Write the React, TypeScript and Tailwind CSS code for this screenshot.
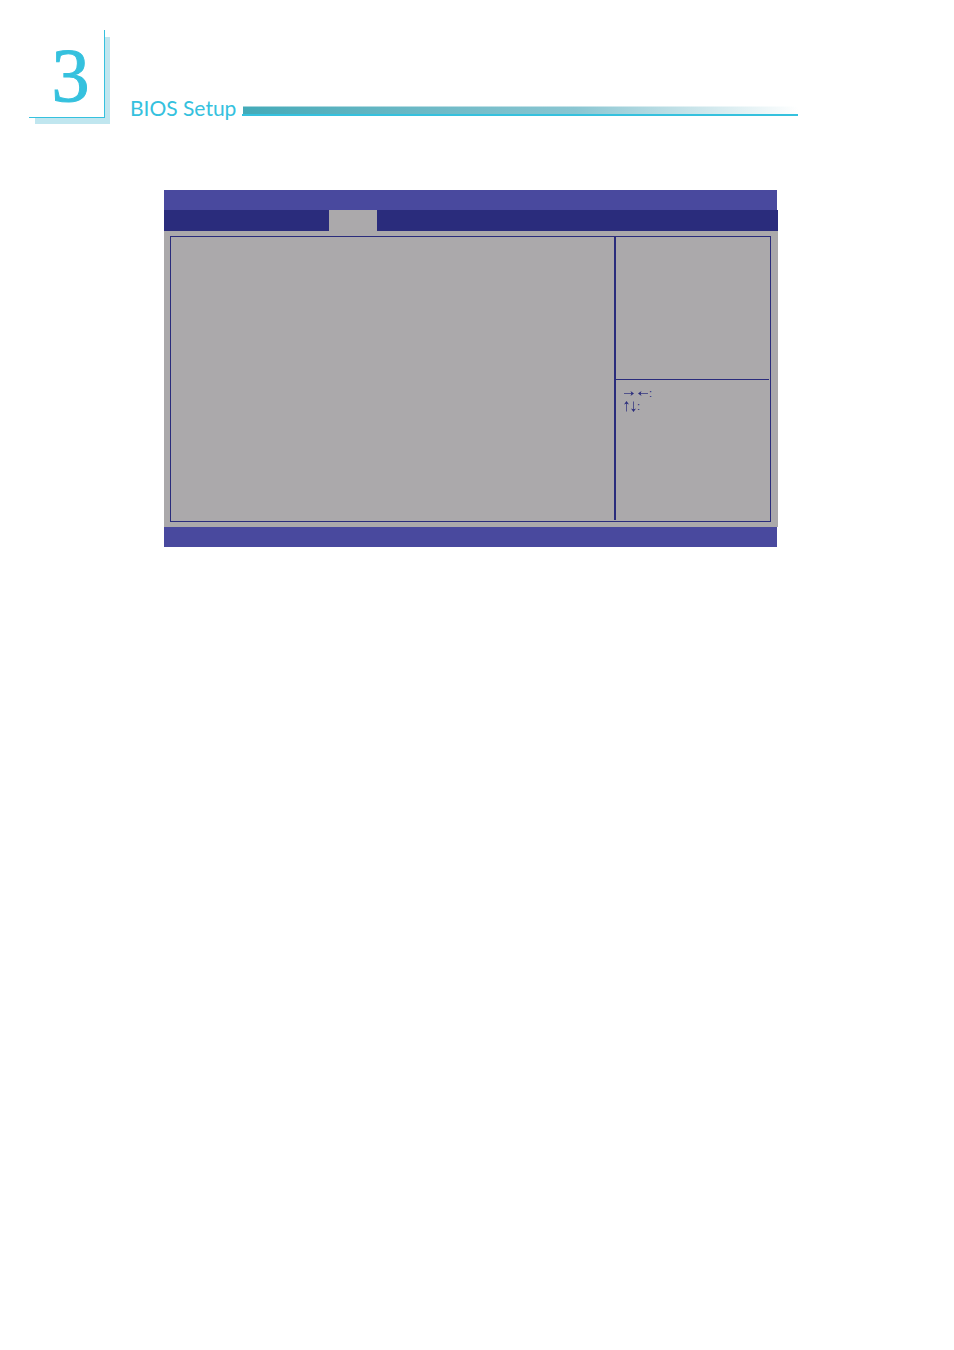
interface KeyHint {
  label: string;
  width: number;
  shafts: string;
  heads: string;
}

const keyHints: KeyHint[] = [
  {
    label: "Select screen",
    width: 26,
    shafts: "M1 6.5h9M25 6.5h-9",
    heads: "M11 6.5L7.5 4l1 2.500l-1 2.500zM15 6.500L18.500 4l-1 2.500l1 2.500z",
  },
  {
    label: "Select item",
    width: 14,
    shafts: "M3.5 11.5v-9M10.5 1.500v9",
    heads: "M3.5 1L1 4.500l2.500-1l2.500 1zM10.500 12L8 8.500l2.500 1l2.500-1z",
  },
];

const ChapterBadge = ({ chapter }: { chapter: number }) => {
  return (
    <div className="relative w-[76px] h-[88px] shrink-0">
      <div className="absolute top-[7px] left-[6px] -right-[5px] -bottom-[6px] bg-[#c0e6ef]" />
      <div className="relative h-full flex items-center justify-center pt-[2px] pl-2 border-r border-b border-[#35c1de] bg-white font-['Liberation_Serif',serif] text-[76px] leading-none text-[#35c1de] [-webkit-text-stroke:1px_#35c1de]">
        {chapter}
      </div>
    </div>
  );
};

const ChapterHeader = ({ chapter, title }: { chapter: number; title: string }) => {
  return (
    <header className="flex items-end pt-[30px] pl-[29px] pr-[156px]">
      <ChapterBadge chapter={chapter} />
      <h1 className="ml-[25px] w-[112px] shrink-0 whitespace-nowrap font-[Lato,sans-serif] text-[21px] leading-5 text-[#35c1de]">
        {title}
      </h1>
      <div className="flex-1 mb-[2px] border-b-2 border-[#35c1de]">
        <div className="ml-px h-2 border-t border-white/50 bg-linear-to-r from-[#43aab8] via-[#8ac6d2] via-60% to-white" />
      </div>
    </header>
  );
};

const SetupScreen = () => {
  return (
    <main className="mt-[72px] ml-[164px] mr-[176px] bg-[#aba9ab]">
      <div className="h-5 border-r border-white bg-[#49499e]" />
      <div className="flex h-[21px]">
        <div className="w-[165px] bg-[#2a2c7c]" />
        <div className="w-12" />
        <div className="flex-1 bg-[#2a2c7c]" />
      </div>
      <div className="pt-[5px] pb-[5px] pl-[6px] pr-[7px]">
        <div className="flex h-[286px] border border-[#2a2c7c]">
          <section className="flex-1" />
          <aside className="mb-px w-[156px] border-l-2 border-[#2a2c7c]">
            <div className="mr-px h-[143px] border-b border-[#2a2c7c]" />
            <ul className="pt-[7px] pl-[7px] font-['Liberation_Sans',sans-serif] text-[11px] leading-[13px] text-[#2a2c7c]">
              {keyHints.map((hint) => (
                <li key={hint.label} className="flex h-[13px] items-center">
                  <svg
                    width={hint.width}
                    height={13}
                    viewBox={`0 0 ${hint.width} 13`}
                    role="img"
                    aria-label={hint.label}
                  >
                    <path d={hint.shafts} stroke="currentColor" strokeWidth={0.7} />
                    <path d={hint.heads} fill="currentColor" />
                  </svg>
                  <span>:</span>
                </li>
              ))}
            </ul>
          </aside>
        </div>
      </div>
      <div className="h-5 border-r border-white bg-[#49499e]" />
    </main>
  );
};

export default function App() {
  return (
    <div className="min-h-screen bg-white">
      <ChapterHeader chapter={3} title="BIOS Setup" />
      <SetupScreen />
    </div>
  );
}
